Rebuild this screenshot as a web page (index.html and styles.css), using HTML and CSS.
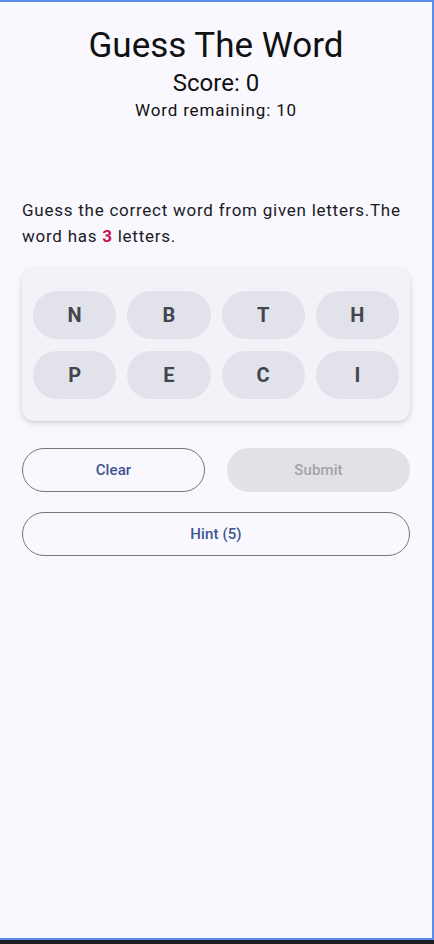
FILE: index.html
```html
<!DOCTYPE html>
<html>
<head>
<meta charset="utf-8">
<link rel="stylesheet" href="styles.css">
</head>
<body>
<div class="frame">
  <div class="screen">
    <header class="head">
      <h1 class="title">Guess The Word</h1>
      <div class="score">Score: 0</div>
      <div class="remaining">Word remaining: 10</div>
    </header>
    <p class="prompt">Guess the correct word from given letters.The word has <b class="count">3</b> letters.</p>
    <div class="card">
      <button class="letter">N</button>
      <button class="letter">B</button>
      <button class="letter">T</button>
      <button class="letter">H</button>
      <button class="letter">P</button>
      <button class="letter">E</button>
      <button class="letter">C</button>
      <button class="letter">I</button>
    </div>
    <div class="actions">
      <button class="btn outline">Clear</button>
      <button class="btn disabled">Submit</button>
    </div>
    <button class="btn outline wide">Hint (5)</button>
  </div>
</div>
</body>
</html>
```
FILE: styles.css
```css
html, body {
  margin: 0;
  padding: 0;
  background: #1f1f22;
}
body {
  width: 434px;
  height: 944px;
  font-family: Roboto, "Noto Sans", sans-serif;
}
.frame {
  height: 940px;
  box-sizing: border-box;
  border-top: 2px solid #5b8def;
  border-right: 2px solid #5b8def;
  border-bottom: 2px solid #5b8def;
  background: #f9f8ff;
}
.screen {
  padding: 0 22px;
  display: flex;
  flex-direction: column;
}
.head {
  display: flex;
  flex-direction: column;
  align-items: center;
  padding-top: 24px;
  color: #111;
}
.title {
  margin: 0;
  font-weight: 400;
  font-size: 35px;
  line-height: 40px;
}
.score {
  font-size: 24px;
  line-height: 28px;
  margin-top: 3px;
}
.remaining {
  font-size: 17px;
  line-height: 24px;
  letter-spacing: 0.85px;
  margin-top: 1px;
}
.prompt {
  margin: 75px 0 0;
  font-size: 17px;
  line-height: 26px;
  letter-spacing: 0.75px;
  color: #1b1b1f;
}
.count {
  color: #c8124a;
  font-weight: 700;
}
.card {
  margin-top: 19px;
  background: #f3f2f8;
  border-radius: 12px;
  box-shadow: 0 2px 6px rgba(0,0,0,0.14), 0 1px 2px rgba(0,0,0,0.08);
  padding: 23px 11px 22px;
  display: grid;
  grid-template-columns: repeat(4, 1fr);
  column-gap: 11px;
  row-gap: 12px;
}
.letter {
  height: 48px;
  border: none;
  border-radius: 24px;
  background: #e2e2ea;
  color: #44464f;
  font-family: Roboto, sans-serif;
  font-weight: 700;
  font-size: 20px;
  padding: 0;
}
.actions {
  margin-top: 27px;
  display: grid;
  grid-template-columns: 1fr 1fr;
  column-gap: 22px;
}
.btn {
  height: 44px;
  border-radius: 22px;
  font-family: Roboto, sans-serif;
  font-size: 15px;
  font-weight: 500;
  letter-spacing: 0.1px;
  padding: 0;
}
.outline {
  background: transparent;
  border: 1px solid #777680;
  color: #3f5590;
}
.disabled {
  background: #e1e1e6;
  border: none;
  color: #a3a3a8;
}
.wide {
  margin-top: 20px;
  width: 100%;
}
```
